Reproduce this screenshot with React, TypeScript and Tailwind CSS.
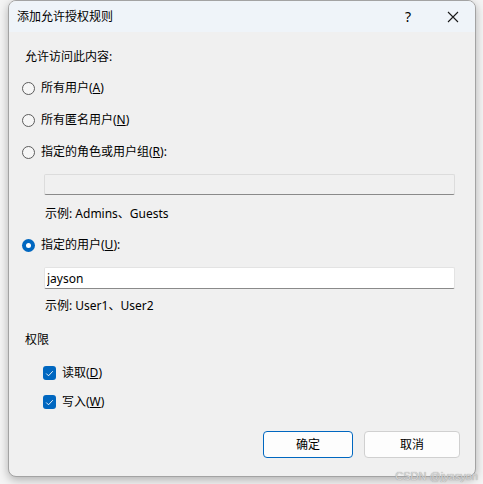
import React, { useState } from 'react';

const font = { fontFamily: '"Noto Sans", "Noto Sans CJK SC", sans-serif' };

const Radio: React.FC<{ checked: boolean; label: React.ReactNode; onClick: () => void; className?: string }> = ({ checked, label, onClick, className }) => (
    <div className={`flex items-center h-4 cursor-default ${className ?? ''}`} onClick={onClick}>
        {checked ? (
            <span className="w-[13px] h-[13px] rounded-full bg-[#0067c0] flex items-center justify-center">
                <span className="w-[5px] h-[5px] rounded-full bg-white" />
            </span>
        ) : (
            <span className="w-[13px] h-[13px] rounded-full border border-[#5c5c5c] bg-[#f6f6f6]" />
        )}
        <span className="ml-[6px] text-[12px] leading-4 text-black">{label}</span>
    </div>
);

const Check: React.FC<{ checked: boolean; label: React.ReactNode; onClick: () => void; className?: string }> = ({ checked, label, onClick, className }) => (
    <div className={`flex items-center h-4 ml-[21px] ${className ?? ''}`} onClick={onClick}>
        {checked ? (
            <span className="w-[13px] h-[14px] rounded-[3px] bg-[#0067c0] flex items-center justify-center">
                <svg width="9" height="9" viewBox="0 0 9 9" fill="none"><path d="M1.5 4.8l2 2 4-4.3" stroke="white" strokeWidth="0.9" strokeLinecap="round" strokeLinejoin="round" /></svg>
            </span>
        ) : (
            <span className="w-[13px] h-[14px] rounded-[3px] border border-[#5c5c5c] bg-[#f6f6f6]" />
        )}
        <span className="ml-[6px] text-[12px] leading-4 text-black">{label}</span>
    </div>
);

const App: React.FC = () => {
    const [mode, setMode] = useState('user');
    const [read, setRead] = useState(true);
    const [write, setWrite] = useState(true);
    const [user, setUser] = useState('jayson');

    return (
        <div className="relative w-[483px] h-[484px] bg-[#f4f4f4] overflow-hidden" style={font}>
            <div className="ml-[8px] w-[468px] h-[477px] rounded-[8px] border border-[#a3a3a3] bg-[#f0f0f0] flex flex-col overflow-hidden shadow-[0_3px_10px_rgba(0,0,0,0.28)]">
                <div className="h-[31px] bg-[#eff4f9] flex items-center pl-[8px] shrink-0">
                    <span className="text-[12px] text-black">添加允许授权规则</span>
                    <span className="ml-auto text-[14px] text-black w-[20px] text-center">?</span>
                    <span className="ml-[25px] mr-[12px] w-[20px] flex justify-center">
                        <svg width="12" height="12" viewBox="0 0 12 12"><path d="M1 1l10 10M11 1L1 11" stroke="#1a1a1a" strokeWidth="1.1" /></svg>
                    </span>
                </div>
                <div className="flex flex-col pl-[13px]">
                    <div className="mt-[17px] ml-[3px] text-[12px] leading-4 text-black">允许访问此内容:</div>
                    <Radio className="mt-[15px]" checked={mode === 'all'} onClick={() => setMode('all')} label={<>所有用户(<u>A</u>)</>} />
                    <Radio className="mt-[16px]" checked={mode === 'anon'} onClick={() => setMode('anon')} label={<>所有匿名用户(<u>N</u>)</>} />
                    <Radio className="mt-[16px]" checked={mode === 'role'} onClick={() => setMode('role')} label={<>指定的角色或用户组(<u>R</u>):</>} />
                    <div className="mt-[14px] ml-[22px] w-[411px] h-[21px] bg-[#f0f0f0] border border-[#dcdcdc] border-b-[#8a8a8a] rounded-[2px]" />
                    <div className="mt-[11px] ml-[23px] text-[12px] leading-4 text-black">示例: Admins、Guests</div>
                    <Radio className="mt-[15px]" checked={mode === 'user'} onClick={() => setMode('user')} label={<>指定的用户(<u>U</u>):</>} />
                    <input
                        value={user}
                        onChange={e => setUser(e.target.value)}
                        className="mt-[14px] ml-[22px] w-[411px] h-[22px] bg-white border border-[#e3e3e3] border-b-[#8a8a8a] rounded-[2px] px-[2px] text-[12px] text-black outline-none"
                        style={font}
                    />
                    <div className="mt-[9px] ml-[23px] text-[12px] leading-4 text-black">示例: User1、User2</div>
                    <div className="mt-[18px] ml-[3px] text-[12px] leading-4 text-black">权限</div>
                    <Check className="mt-[17px]" checked={read} onClick={() => setRead(!read)} label={<>读取(<u>D</u>)</>} />
                    <Check className="mt-[13px]" checked={write} onClick={() => setWrite(!write)} label={<>写入(<u>W</u>)</>} />
                    <div className="mt-[21px] flex justify-end pr-[15px] gap-[11px]">
                        <button className="w-[90px] h-[27px] rounded-[4px] border border-[#0067c0] bg-[#fdfdfd] text-[12px] text-black">确定</button>
                        <button className="w-[96px] h-[27px] rounded-[4px] border border-[#d0d0d0] bg-[#fdfdfd] text-[12px] text-black">取消</button>
                    </div>
                </div>
            </div>
            <div className="absolute right-[5px] bottom-[0px] text-[11px] leading-4 text-[#d8d8d8] [text-shadow:0_0_1px_#888]" style={{ fontFamily: '"Liberation Sans", sans-serif' }}>CSDN @jyasyon</div>
        </div>
    );
};

export default App;
